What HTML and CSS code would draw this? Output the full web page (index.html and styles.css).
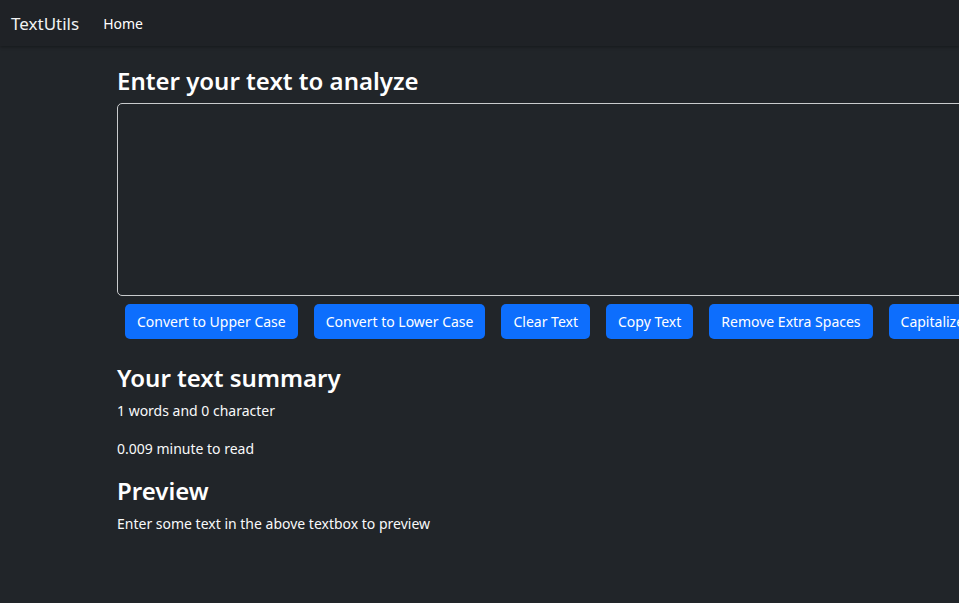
FILE: index.html
```html
<!DOCTYPE html>
<html lang="en">
<head>
<meta charset="utf-8">
<title>TextUtils</title>
<link rel="stylesheet" href="styles.css">
</head>
<body>
<nav class="navbar">
  <a class="brand" href="#">TextUtils</a>
  <a class="nav-link" href="#">Home</a>
</nav>
<main class="container">
  <h1 class="title">Enter your text to analyze</h1>
  <textarea class="textbox"></textarea>
  <div class="buttons">
    <button class="btn">Convert to Upper Case</button>
    <button class="btn">Convert to Lower Case</button>
    <button class="btn">Clear Text</button>
    <button class="btn">Copy Text</button>
    <button class="btn">Remove Extra Spaces</button>
    <button class="btn">Capitalize</button>
  </div>
  <h2 class="section">Your text summary</h2>
  <p class="text">1 words and 0 character</p>
  <p class="text read">0.009 minute to read</p>
  <h2 class="section preview">Preview</h2>
  <p class="text">Enter some text in the above textbox to preview</p>
</main>
</body>
</html>
```
FILE: styles.css
```css
html, body {
  margin: 0;
  padding: 0;
}
body {
  background: #212529;
  color: #f8f9fa;
  font-family: "Noto Sans", "Open Sans", sans-serif;
  overflow: hidden;
  width: 959px;
  height: 603px;
}
.navbar {
  height: 46px;
  background: #1f2226;
  box-shadow: 0 1px 3px rgba(0,0,0,0.35);
  display: flex;
  align-items: center;
  padding: 0 11px;
  box-sizing: border-box;
}
.brand {
  color: #f1f2f3;
  text-decoration: none;
  font-size: 17px;
  margin-right: 24px;
}
.nav-link {
  color: #ffffff;
  text-decoration: none;
  font-size: 14px;
}
.container {
  margin-left: 117px;
  width: 1000px;
  padding-top: 20px;
}
.title {
  margin: 0 0 7px 0;
  font-size: 24px;
  font-weight: 600;
  line-height: 30px;
  color: #ffffff;
}
.textbox {
  display: block;
  width: 100%;
  height: 193px;
  box-sizing: border-box;
  background: #212529;
  border: 1px solid #c9cbcd;
  border-radius: 5px;
  margin: 0;
  resize: none;
}
.buttons {
  display: flex;
  gap: 16px;
  margin: 8px 0 0 8px;
}
.btn {
  background: #0d6efd;
  color: #ffffff;
  border: none;
  border-radius: 5px;
  height: 35px;
  padding: 0 12px;
  font-family: "Noto Sans", "Open Sans", sans-serif;
  font-size: 14px;
  white-space: nowrap;
}
.section {
  margin: 24px 0 0 0;
  font-size: 24px;
  font-weight: 600;
  line-height: 30px;
  color: #ffffff;
}
.text {
  margin: 8px 0 0 0;
  font-size: 14px;
  line-height: 20px;
}
.read {
  margin-top: 18px;
}
.preview {
  margin-top: 17px;
}
```
